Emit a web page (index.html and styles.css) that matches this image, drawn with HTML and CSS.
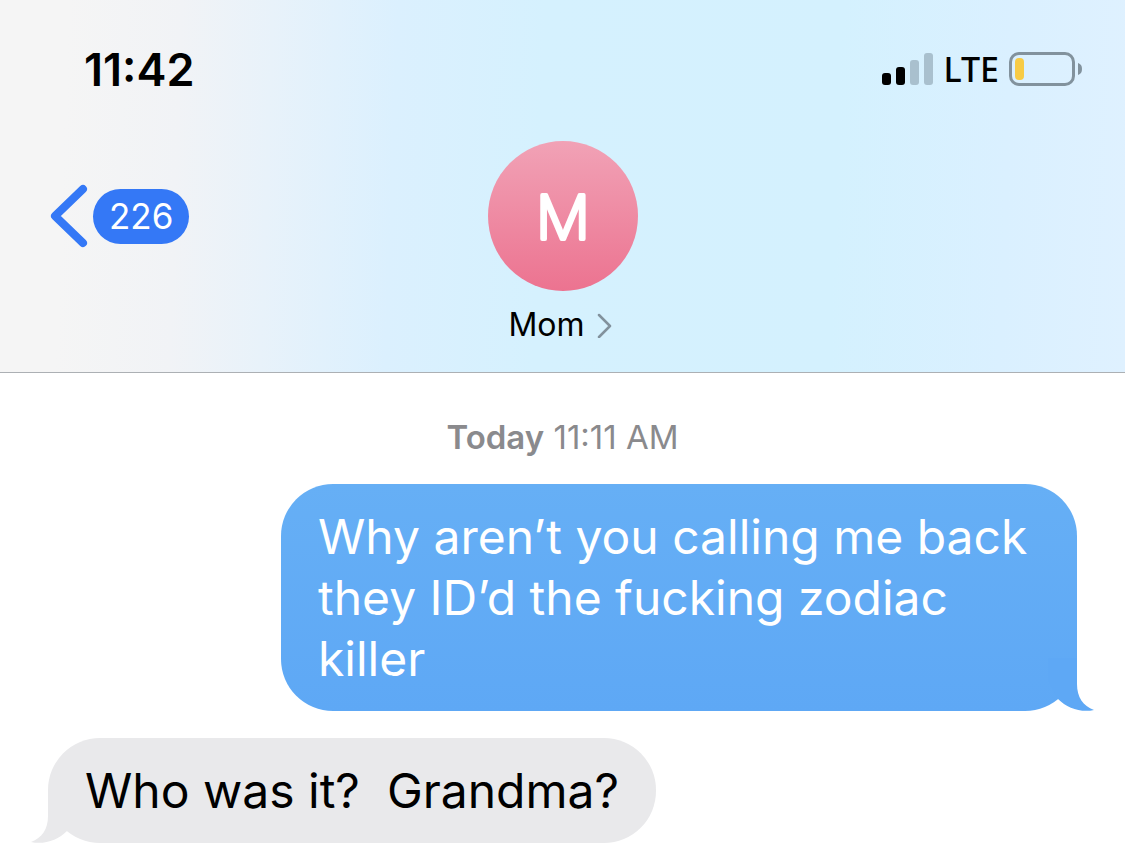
FILE: index.html
```html
<!DOCTYPE html>
<html lang="en">
<head>
    <meta charset="UTF-8">
    <meta name="viewport" content="width=device-width, initial-scale=1.0">
    <title>Messages</title>
    <link rel="stylesheet" href="styles.css">
</head>
<body>
    <header class="header">
        <div class="status-bar">
            <time class="clock">11:42</time>
            <div class="status-icons">
                <svg class="signal" width="51" height="34" viewBox="0 0 51 34" aria-hidden="true">
                    <rect x="0" y="21" width="9" height="12" rx="3" fill="#000"/>
                    <rect x="14" y="15" width="9" height="18" rx="3" fill="#000"/>
                    <rect x="28" y="8" width="9" height="25" rx="3" fill="#a9c0ce"/>
                    <rect x="42" y="1" width="9" height="32" rx="3" fill="#a9c0ce"/>
                </svg>
                <span class="network">LTE</span>
                <svg class="battery" width="74" height="34" viewBox="0 0 74 34" aria-hidden="true">
                    <rect x="1.5" y="1.5" width="63" height="31" rx="8.5" fill="none" stroke="#82929d" stroke-width="3"/>
                    <rect x="6" y="6" width="9" height="22" rx="4" fill="#f7cb45"/>
                    <path d="M69 11C72 12 73 14 73 17C73 20 72 22 69 23Z" fill="#82929d"/>
                </svg>
            </div>
        </div>
        <nav class="nav">
            <button type="button" class="back" aria-label="Back, 226 unread">
                <svg width="38" height="64" viewBox="0 0 38 64" aria-hidden="true">
                    <path d="M33 5L5 32L33 59" fill="none" stroke="#3478f6" stroke-width="8" stroke-linecap="round" stroke-linejoin="round"/>
                </svg>
                <span class="unread">226</span>
            </button>
            <button type="button" class="contact">
                <svg class="avatar" viewBox="0 0 150 150" aria-hidden="true">
                    <text class="initial" x="75" y="98">M</text>
                </svg>
                <span class="contact-name">
                    Mom
                    <svg width="20" height="26" viewBox="0 0 20 26" aria-hidden="true">
                        <path d="M2 3L13 14L2 25" fill="none" stroke="#82929d" stroke-width="2.5" stroke-linecap="round" stroke-linejoin="round"/>
                    </svg>
                </span>
            </button>
        </nav>
    </header>
    <main class="messages">
        <p class="timestamp"><strong>Today</strong> 11:11 AM</p>
        <div class="bubble sent">
            Why aren’t you calling me back they ID’d the fucking zodiac killer
            <svg class="tail" width="54" height="53" viewBox="0 0 54 53" aria-hidden="true">
                <path d="M37 0V26C37 39 43 48 54 52C41 55 27 50 18 41L8 22V0Z" fill="#5ea8f5"/>
            </svg>
        </div>
        <div class="bubble received">
            Who was it?&nbsp; Grandma?
            <svg class="tail" width="54" height="53" viewBox="0 0 54 53" aria-hidden="true">
                <path d="M17 0V26C17 39 11 48 0 52C13 55 27 50 36 41L46 22V0Z" fill="#e9e9eb"/>
            </svg>
        </div>
    </main>
</body>
</html>
```
FILE: styles.css
```css
body {
    margin: 0;
    background-color: #fff;
    color: #000;
    font-family: Inter, "Liberation Sans", sans-serif;
}
button {
    padding: 0;
    border: none;
    background: none;
    color: inherit;
    font-family: inherit;
    cursor: pointer;
}
svg {
    display: block;
    flex-shrink: 0;
}
.header {
    padding: 44px 0 27px;
    border-bottom: 1px solid #acb0b4;
    background: linear-gradient(92deg, #f5f5f5 6%, #f1f3f6 16%, #e8f2fa 24%, #dbf0fe 35%, #d5f1fe 48%, #d4f1fe 74%, #daf0ff 89%, #dff1ff 100%);
}
.status-bar {
    display: flex;
    justify-content: space-between;
    align-items: center;
    height: 50px;
    padding: 0 42px 0 84px;
}
.clock {
    font-size: 45px;
    font-weight: 600;
}
.status-icons {
    display: flex;
    align-items: center;
    gap: 10px;
}
.network {
    font-family: "Noto Sans", sans-serif;
    font-size: 34px;
    font-weight: 500;
    line-height: 50px;
}
.nav {
    display: grid;
    grid-template-columns: 1fr auto 1fr;
    align-items: start;
    margin-top: 47px;
    padding: 0 50px;
}
.back {
    display: flex;
    align-items: center;
    justify-self: start;
    gap: 5px;
    height: 150px;
}
.unread {
    padding: 0 16px;
    border-radius: 28px;
    background-color: #3478f6;
    color: #fff;
    font-size: 35px;
    line-height: 55px;
}
.contact {
    display: flex;
    flex-direction: column;
    align-items: center;
    gap: 14px;
}
.avatar {
    width: 150px;
    height: 150px;
    border-radius: 50%;
    background: linear-gradient(#f1a2b6, #ec7390);
}
.initial {
    fill: #fff;
    stroke: #fff;
    stroke-width: 4px;
    stroke-linejoin: round;
    font-size: 60px;
    font-weight: 200;
    text-anchor: middle;
}
.contact-name {
    display: flex;
    align-items: center;
    gap: 12px;
    font-size: 32px;
    line-height: 40px;
}
.messages {
    display: flex;
    flex-direction: column;
    padding: 44px 48px 16px;
}
.timestamp {
    margin: 0 0 27px;
    color: #8a8a8d;
    font-size: 33px;
    line-height: 40px;
    text-align: center;
}
.timestamp strong {
    font-weight: 600;
}
.bubble {
    position: relative;
    box-sizing: border-box;
    max-width: 796px;
    padding: 22px 37px;
    border-radius: 52px;
    font-size: 48px;
    line-height: 61px;
}
.sent {
    align-self: flex-end;
    margin-bottom: 27px;
    background: linear-gradient(#66aff5, #5ea8f5);
    color: #fff;
}
.received {
    align-self: flex-start;
    background-color: #e9e9eb;
}
.tail {
    position: absolute;
    bottom: 0;
}
.sent .tail {
    right: -17px;
}
.received .tail {
    left: -17px;
}
```
